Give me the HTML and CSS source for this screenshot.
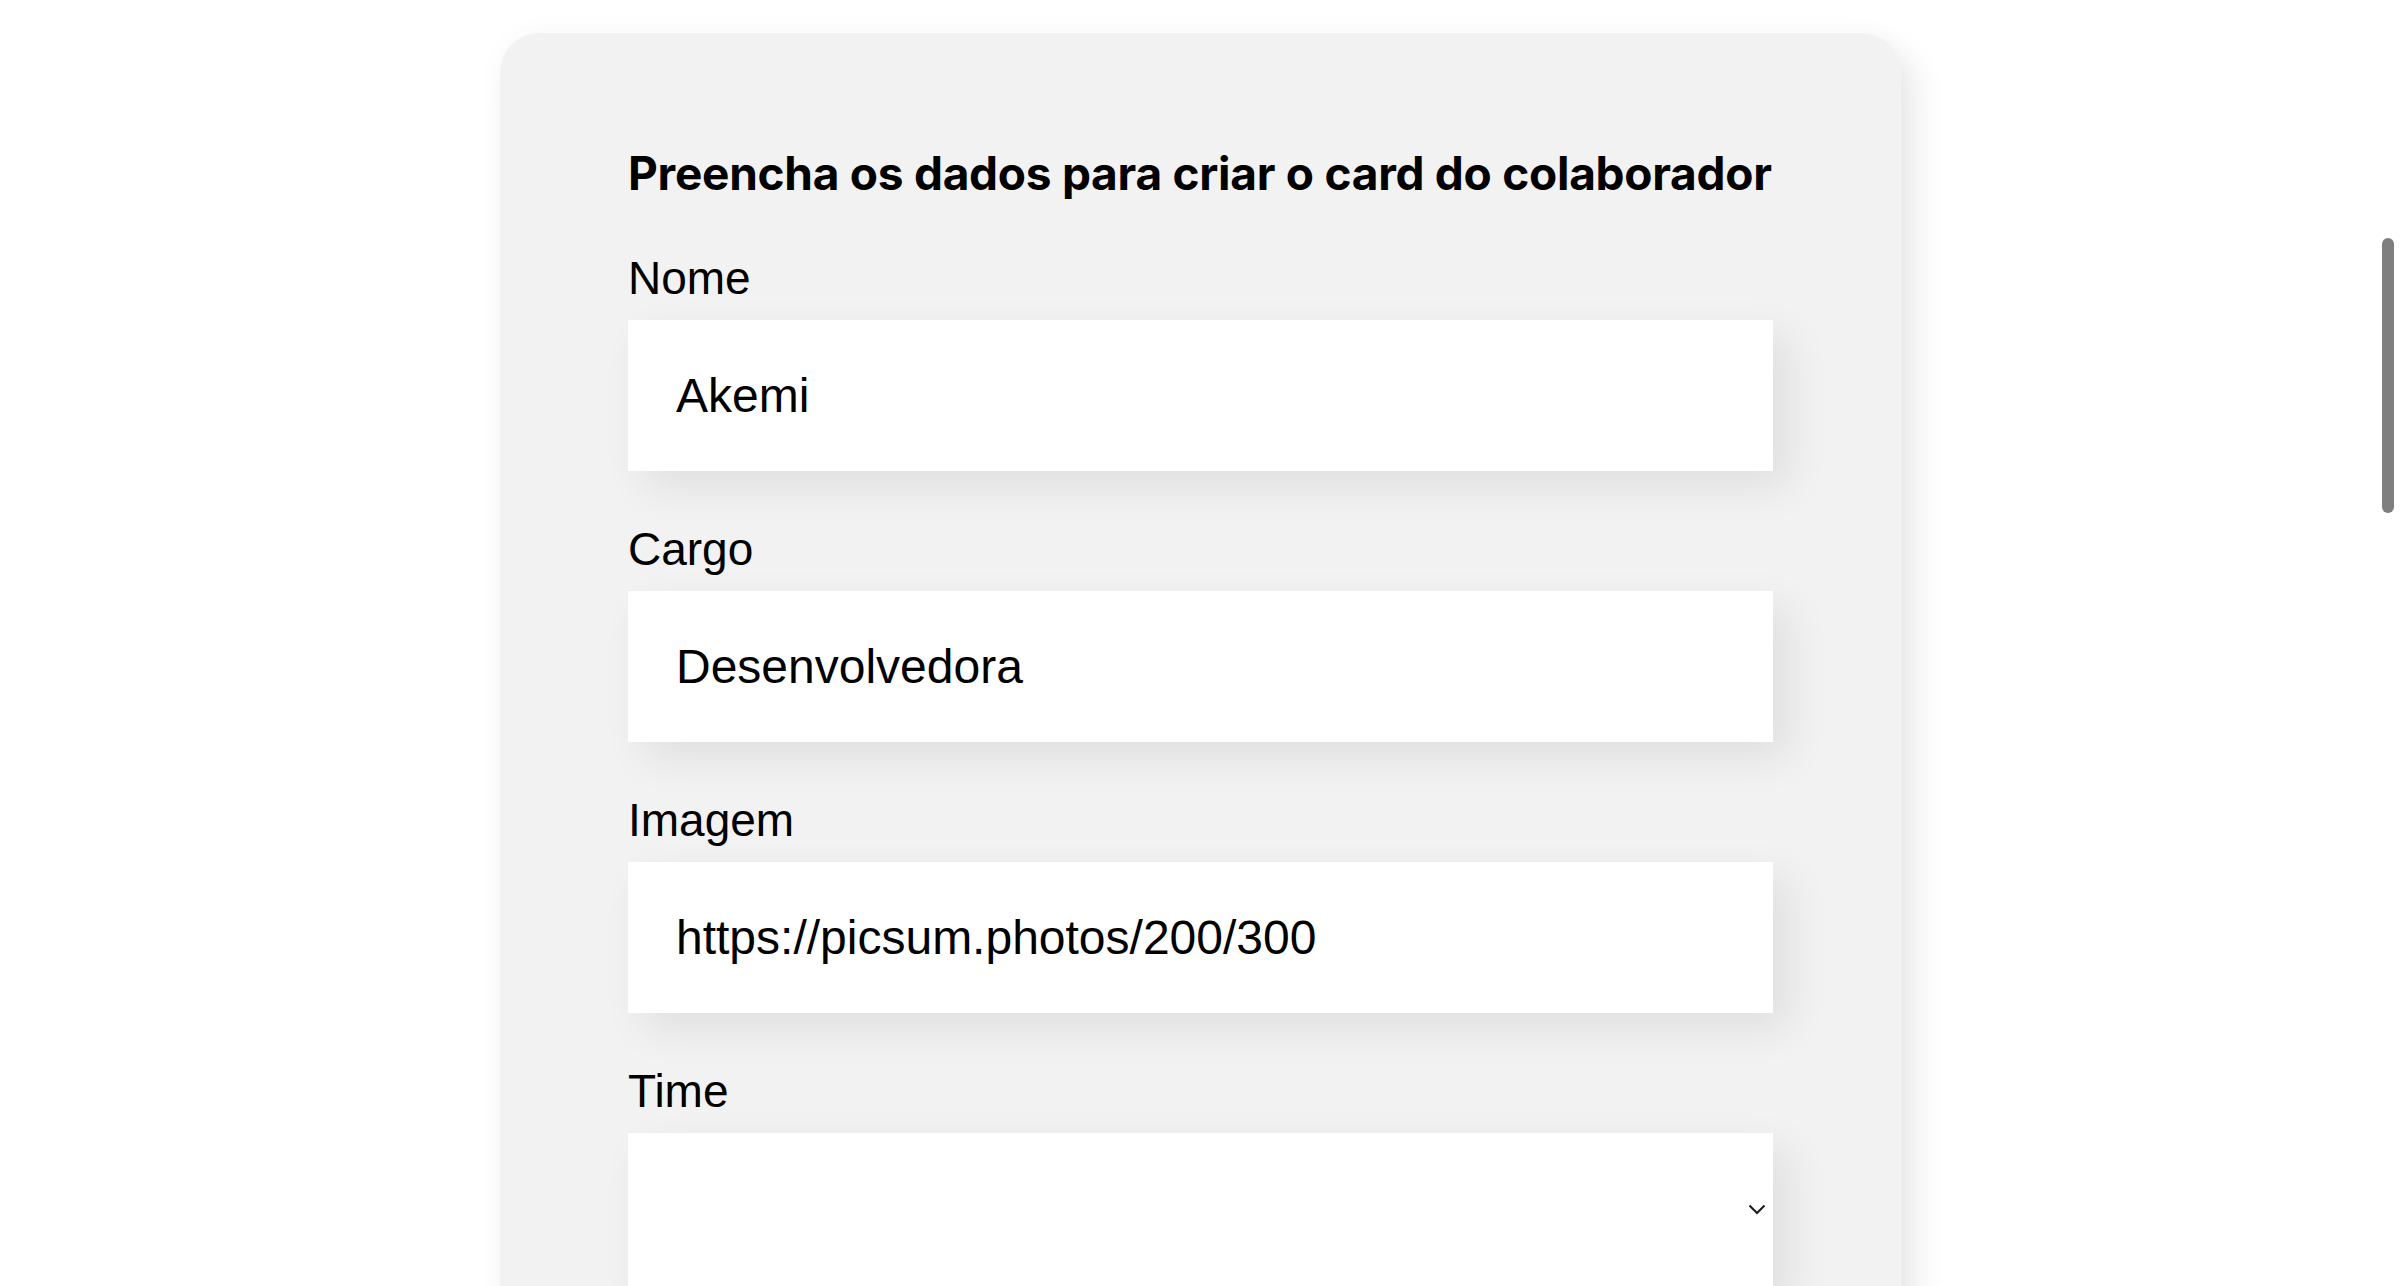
FILE: index.html
```html
<!DOCTYPE html>
<html lang="pt-BR">
<head>
<meta charset="utf-8">
<title>Organo</title>
<link rel="stylesheet" href="styles.css">
</head>
<body>
<main class="page">
  <form class="card">
    <h2 class="title">Preencha os dados para criar o card do colaborador</h2>
    <div class="field">
      <label class="label" for="nome">Nome</label>
      <input class="input" id="nome" type="text" value="Akemi">
    </div>
    <div class="field">
      <label class="label" for="cargo">Cargo</label>
      <input class="input" id="cargo" type="text" value="Desenvolvedora">
    </div>
    <div class="field">
      <label class="label" for="imagem">Imagem</label>
      <input class="input" id="imagem" type="text" value="https://picsum.photos/200/300">
    </div>
    <div class="field">
      <label class="label" for="time">Time</label>
      <div class="select-wrap">
        <select class="input select" id="time">
          <option value=""></option>
          <option>Programação</option>
          <option>Front-End</option>
          <option>Data Science</option>
        </select>
        <svg class="chevron" width="18" height="11" viewBox="0 0 18 11" aria-hidden="true">
          <polyline points="1.5,1.5 9,9 16.5,1.5" fill="none" stroke="#1a1a1a" stroke-width="2"/>
        </svg>
      </div>
    </div>
  </form>
</main>
<div class="scroll-thumb"></div>
</body>
</html>
```

FILE: styles.css
```css
html, body {
  margin: 0;
  padding: 0;
  background: #ffffff;
  overflow: hidden;
  height: 100%;
}

.page {
  display: flex;
  justify-content: center;
  padding-top: 33px;
  padding-left: 1px;
}

.card {
  width: 1145px;
  padding: 112px 128px 120px;
  background: #f2f2f2;
  border-radius: 40px;
  box-shadow: 16px 16px 32px rgba(0, 0, 0, 0.08), 0 0 28px rgba(0, 0, 0, 0.03);
  display: flex;
  flex-direction: column;
}

.title {
  margin: 0 0 49px;
  font-family: Inter, "Noto Sans", sans-serif;
  font-weight: 700;
  font-size: 46px;
  line-height: 56px;
  color: #000;
  letter-spacing: -0.26px;
  white-space: nowrap;
}

.field {
  display: flex;
  flex-direction: column;
  margin-bottom: 50px;
}

.label {
  font-family: "Liberation Sans", Arial, sans-serif;
  font-size: 46px;
  line-height: 56px;
  color: #000;
  margin-bottom: 14px;
}

.input {
  box-sizing: border-box;
  width: 100%;
  height: 151px;
  padding: 0 48px;
  border: none;
  outline: none;
  background: #ffffff;
  font-family: "Liberation Sans", Arial, sans-serif;
  font-size: 48px;
  color: #000;
  box-shadow: 16px 16px 40px rgba(0, 0, 0, 0.08);
  border-radius: 0;
}

.select-wrap {
  position: relative;
}

.select {
  -webkit-appearance: none;
  appearance: none;
  display: block;
  height: 160px;
}

.chevron {
  position: absolute;
  right: 7px;
  top: 71px;
  pointer-events: none;
}

.scroll-thumb {
  position: fixed;
  left: 2382px;
  top: 238px;
  width: 12px;
  height: 275px;
  border-radius: 6px;
  background: #7f7f7f;
}
```
